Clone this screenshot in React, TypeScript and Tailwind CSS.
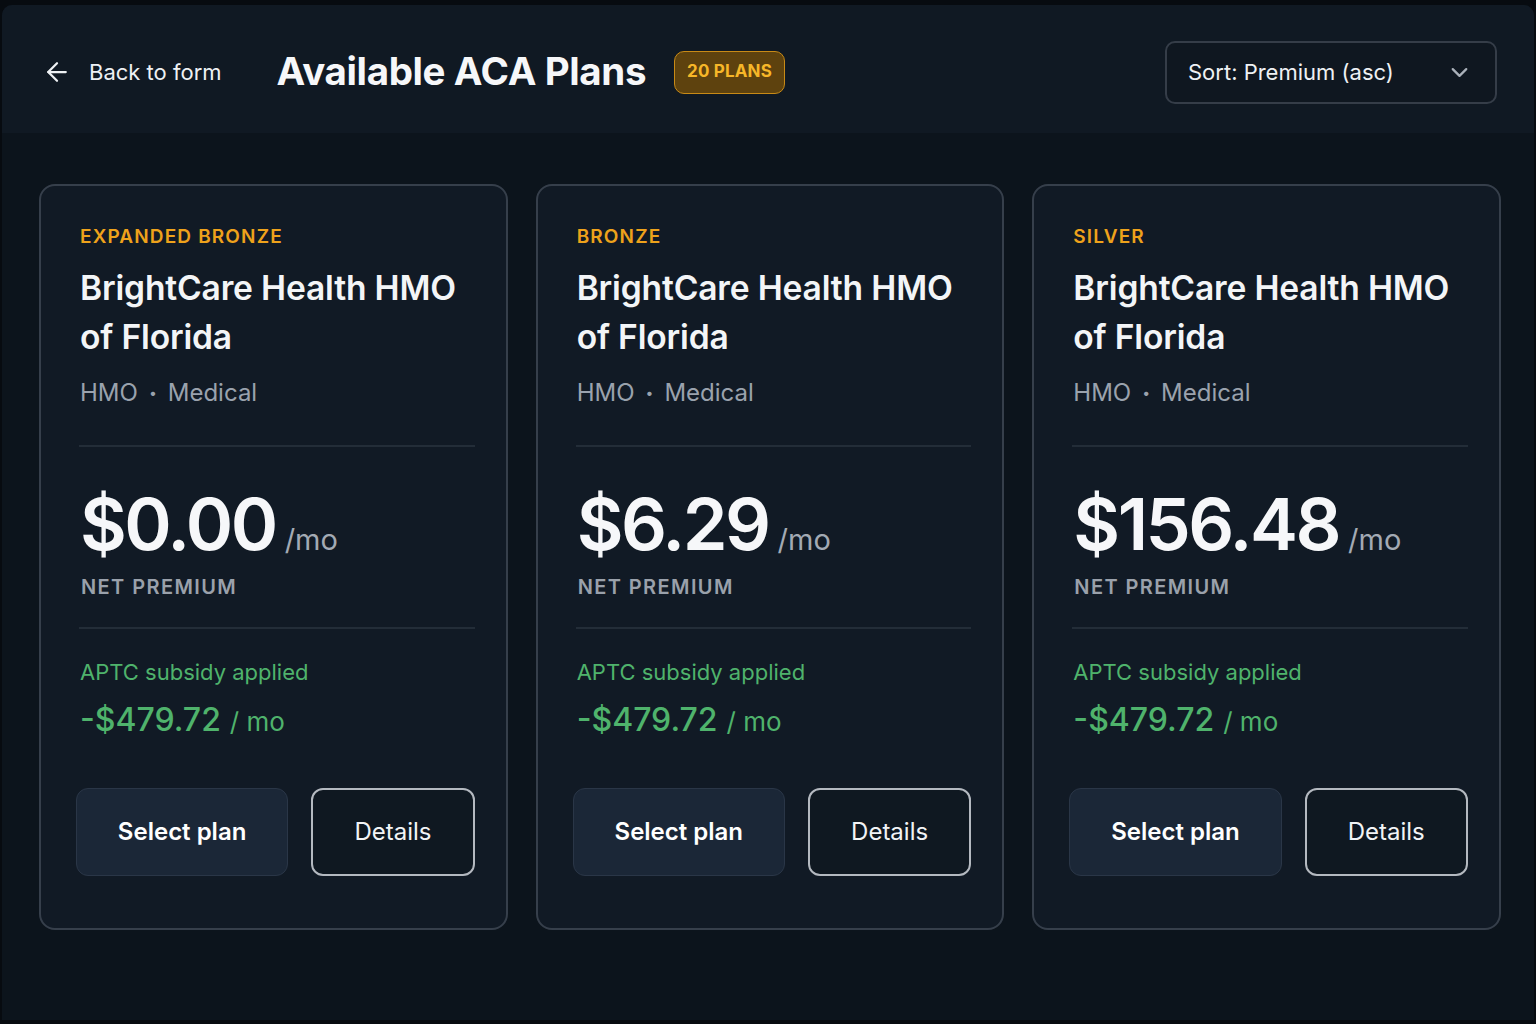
import React from "react";
import { ArrowLeft, ChevronDown } from "lucide-react";

type Plan = { tier: string; price: string };

const plans: Plan[] = [
  { tier: "EXPANDED BRONZE", price: "$0.00" },
  { tier: "BRONZE", price: "$6.29" },
  { tier: "SILVER", price: "$156.48" },
];

function PlanCard({ plan }: { plan: Plan }) {
  return (
    <div className="h-[746px] rounded-[16px] border-2 border-[#363f4b] bg-[#111a25] pt-[39px] pl-[38px] pr-[31px] flex flex-col">
      <div className="pl-[1px] text-[19px] leading-[24px] font-semibold tracking-[0.06em] text-[#eea21b]">
        {plan.tier}
      </div>
      <div className="mt-[14px] pl-[1px] text-[33.6px] leading-[49px] font-semibold text-[#f3f5f7] tracking-[-0.005em]">
        BrightCare Health HMO
        <br />
        of Florida
      </div>
      <div className="mt-[16px] pl-[1px] text-[24px] leading-[32px] text-[#9aa2ad] flex items-center">
        <span>HMO</span>
        <span className="mx-[11px] text-[14px]">•</span>
        <span>Medical</span>
      </div>
      <div className="mt-[36px] h-[2px] bg-[#232d38]" />
      <div className="mt-[37px] pl-[1px] flex items-baseline">
        <span className="text-[72px] leading-[80px] font-semibold tracking-[-0.035em] text-[#f6f7f9]">
          {plan.price}
        </span>
        <span className="ml-[9px] text-[29px] text-[#a3aab4]">/mo</span>
      </div>
      <div className="mt-[11px] pl-[2px] text-[20px] leading-[24px] font-semibold tracking-[0.07em] text-[#9aa1ab]">
        NET PREMIUM
      </div>
      <div className="mt-[28px] h-[2px] bg-[#232d38]" />
      <div className="mt-[28px] pl-[1px] text-[22px] leading-[30px] text-[#4fb36c]">
        APTC subsidy applied
      </div>
      <div className="mt-[13px] pl-[1px] flex items-baseline leading-[40px] text-[#4fb36c]">
        <span className="text-[32px] font-medium">-$479.72</span>
        <span className="ml-[9px] text-[26px]">/ mo</span>
      </div>
      <div className="mt-[46px] -ml-[3px] grid grid-cols-[213fr_164fr] gap-[23px]">
        <button className="h-[88px] rounded-[12px] bg-[#1b2737] border border-[#2a3647] text-[24px] font-semibold text-white">
          Select plan
        </button>
        <button className="h-[88px] rounded-[12px] bg-[#0f1821] border-2 border-[#b4b9c0] text-[24px] text-[#f2f4f6]">
          Details
        </button>
      </div>
    </div>
  );
}

export default function App() {
  return (
    <div className="w-[1536px] h-[1024px] bg-[#070b10] pt-[5px] pb-[4px] overflow-hidden font-['Inter',sans-serif]">
      <div className="h-full bg-[#0c141c] rounded-t-[10px] mx-[2px] flex flex-col">
        <header className="h-[128px] bg-[#101923] rounded-t-[10px] flex items-center pt-[6px] pl-[40px] pr-[37px]">
          <button className="flex items-center text-[#eef1f4]">
            <ArrowLeft size={30} strokeWidth={1.8} />
            <span className="ml-[17px] text-[22px]">Back to form</span>
          </button>
          <h1 className="ml-[55px] text-[38.5px] font-bold text-[#f6f7f9] tracking-[-0.01em]">
            Available ACA Plans
          </h1>
          <span className="ml-[28px] h-[43px] px-[12px] rounded-[10px] bg-[#5e420e] border border-[#c88a16] text-[#f7b728] text-[17px] font-bold flex items-center tracking-[0.01em]">
            20 PLANS
          </span>
          <div className="ml-auto w-[332px] h-[63px] rounded-[10px] border-2 border-[#353d48] bg-[#0f1720] flex items-center pl-[21px] pr-[22px]">
            <span className="text-[22px] text-[#eef1f4]">Sort: Premium (asc)</span>
            <ChevronDown className="ml-auto text-[#aab1ba]" size={27} strokeWidth={2} />
          </div>
        </header>
        <main className="pt-[51px] pl-[37px] pr-[33px] grid grid-cols-3 gap-[28px]">
          {plans.map((p) => (
            <PlanCard key={p.tier} plan={p} />
          ))}
        </main>
      </div>
    </div>
  );
}
